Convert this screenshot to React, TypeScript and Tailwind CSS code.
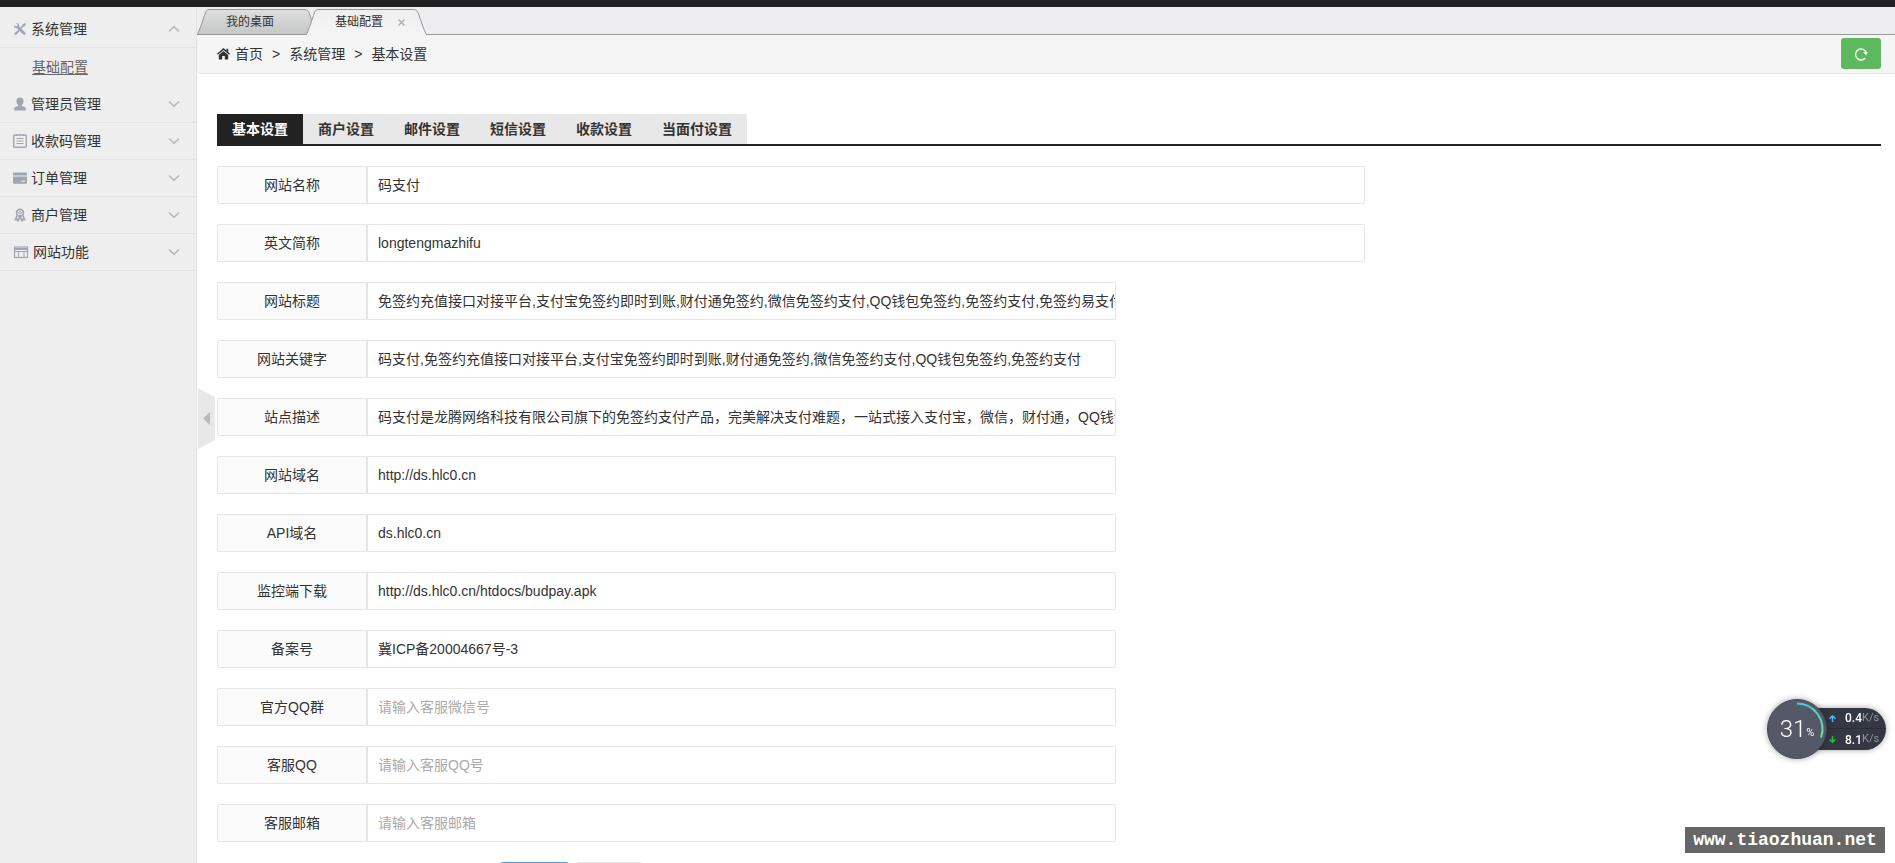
import type { ReactNode } from "react";

type MenuItem = {
  title: string;
  icon: ReactNode;
  open?: boolean;
  children?: string[];
};

type Field = {
  id: string;
  label: string;
  value?: string;
  placeholder?: string;
  wide?: boolean;
};

const menu: MenuItem[] = [
  {
    title: "系统管理",
    open: true,
    children: ["基础配置"],
    icon: (
      <svg viewBox="0 0 14 14" className="h-3.5 w-3.5 shrink-0" fill="currentColor">
        <path d="M1 3.200C.6 5 2 6.600 4 6.200L10.200 12.600C11.200 13.600 13.200 12.400 12.400 10.800L6.200 4.400C6.600 2.200 5 .6 3 1L4.600 2.800 4.300 4.100 2.900 4.500Z" />
        <path d="M13.200 2 12 .9 9.400 2.600 9.200 3.700 7.200 5.800 8.300 6.900 10.400 4.800 11.500 4.600Z" />
        <path d="M5.800 7.400 1.600 11.100C.6 12.200 2 13.800 3.200 12.800L7 8.700Z" />
      </svg>
    ),
  },
  {
    title: "管理员管理",
    icon: (
      <svg viewBox="0 0 14 14" className="h-3.5 w-3.5 shrink-0" fill="currentColor">
        <path d="M7 .5c2.200 0 3.600 1.500 3.600 3.500 0 1.700-.7 3-1.700 3.900v1.200c2.300.5 3.900 1.200 4 2.600.1 1-.3 1.500-1 1.700H2.100c-.7-.2-1.100-.7-1-1.700.1-1.400 1.700-2.100 4-2.600V7.900C4.100 7 3.400 5.700 3.400 4 3.400 2 4.800.5 7 .5Z" />
      </svg>
    ),
  },
  {
    title: "收款码管理",
    icon: (
      <svg viewBox="0 0 14 14" className="h-3.5 w-3.5 shrink-0" fill="none" stroke="currentColor">
        <rect x=".7" y="1" width="12.600" height="12.300" rx="1.200" strokeWidth="1.400" />
        <path d="M3.500 4.500h7M3.500 7h7M3.500 9.500h7" />
        <path d="M3.500 0v2M10.500 0v2" strokeWidth="1.200" />
      </svg>
    ),
  },
  {
    title: "订单管理",
    icon: (
      <svg viewBox="0 0 14 14" className="h-3.5 w-3.5 shrink-0" fill="currentColor">
        <path d="M1.200 1.500h11.600c.7 0 1.200.5 1.200 1.200V4.500H0V2.700C0 2 .5 1.500 1.200 1.500Z" />
        <path fillRule="evenodd" d="M0 5.500h14v6c0 .7-.5 1.200-1.200 1.200H1.200C.5 12.700 0 12.200 0 11.500Zm8.500 4v1.200h3.500V9.500Z" />
      </svg>
    ),
  },
  {
    title: "商户管理",
    icon: (
      <svg viewBox="0 0 14 14" className="h-3.5 w-3.5 shrink-0" fill="none" stroke="currentColor">
        <circle cx="7" cy="4.800" r="3.400" strokeWidth="1.700" />
        <circle cx="7" cy="4.800" r="1.200" />
        <path d="M4.200 7.500 2.400 11.500l1.700-.2.900 1.400L7 8.800l2 3.900.9-1.400 1.700.2L9.800 7.500" strokeWidth="1.600" />
      </svg>
    ),
  },
  {
    title: "网站功能",
    icon: (
      <svg viewBox="0 0 16 14" className="h-3.5 w-4 shrink-0" fill="none" stroke="currentColor">
        <rect x="1.500" y="2" width="13" height="10.500" strokeWidth="1.200" />
        <path d="M1.500 4h13" strokeWidth="2" />
        <path d="M1.500 6.500h13M5.500 6.500v6M11 6.500v6" />
      </svg>
    ),
  },
];

const settingTabs = ["基本设置", "商户设置", "邮件设置", "短信设置", "收款设置", "当面付设置"];

const fields: Field[] = [
  { id: "name", label: "网站名称", value: "码支付", wide: true },
  { id: "ename", label: "英文简称", value: "longtengmazhifu", wide: true },
  {
    id: "title",
    label: "网站标题",
    value:
      "免签约充值接口对接平台,支付宝免签约即时到账,财付通免签约,微信免签约支付,QQ钱包免签约,免签约支付,免签约易支付",
  },
  {
    id: "keywords",
    label: "网站关键字",
    value: "码支付,免签约充值接口对接平台,支付宝免签约即时到账,财付通免签约,微信免签约支付,QQ钱包免签约,免签约支付",
  },
  {
    id: "description",
    label: "站点描述",
    value:
      "码支付是龙腾网络科技有限公司旗下的免签约支付产品，完美解决支付难题，一站式接入支付宝，微信，财付通，QQ钱包",
  },
  { id: "domain", label: "网站域名", value: "http://ds.hlc0.cn" },
  { id: "api", label: "API域名", value: "ds.hlc0.cn" },
  { id: "download", label: "监控端下载", value: "http://ds.hlc0.cn/htdocs/budpay.apk" },
  { id: "icp", label: "备案号", value: "冀ICP备20004667号-3" },
  { id: "group", label: "官方QQ群", placeholder: "请输入客服微信号" },
  { id: "qq", label: "客服QQ", placeholder: "请输入客服QQ号" },
  { id: "email", label: "客服邮箱", placeholder: "请输入客服邮箱" },
];

function Sidebar() {
  return (
    <aside className="w-[197px] shrink-0 border-r border-[#e2e2e2] bg-[#eeeeee] pt-1">
      {menu.map((item) => (
        <div key={item.title}>
          <button
            type="button"
            className="flex h-[37px] w-full items-center gap-1 border-b border-[#e2e2e2] pr-4 pl-[13px] text-[#9fa6b2]"
          >
            {item.icon}
            <span className="text-[#333333]">{item.title}</span>
            <svg
              viewBox="0 0 12 8"
              className={`ml-auto h-2 w-3 text-[#b4b4b4] ${item.open ? "rotate-180" : ""}`}
              fill="none"
              stroke="currentColor"
              strokeWidth="1.400"
            >
              <path d="m1 1.500 5 4.700 5-4.700" />
            </svg>
          </button>
          {item.children?.map((child) => (
            <a key={child} href="#" className="flex h-[38px] items-center pl-8 text-[#666666] underline underline-offset-2">
              {child}
            </a>
          ))}
        </div>
      ))}
    </aside>
  );
}

function TabShape({ active = false }: { active?: boolean }) {
  return (
    <svg viewBox="0 0 121 26" className="absolute top-0 left-0 h-[26px] w-[121px]">
      <defs>
        <linearGradient id="idle-tab" x1="0" y1="0" x2="0" y2="1">
          <stop offset="0" stopColor="#dedfdf" />
          <stop offset="1" stopColor="#c4c5c5" />
        </linearGradient>
        <linearGradient id="active-tab" x1="0" y1="0" x2="0" y2="1">
          <stop offset="0" stopColor="#eeeeee" />
          <stop offset="1" stopColor="#f5f5f5" />
        </linearGradient>
      </defs>
      <path
        d="M0 26 C2 24 8 4 9 2.500 Q10 .5 12 .5 H108 Q110 .5 111.500 2.500 C113 5 118 23 121 26"
        fill={active ? "url(#active-tab)" : "url(#idle-tab)"}
        stroke="#979797"
      />
      {!active && <path d="M0 25.500H121" stroke="#979797" />}
    </svg>
  );
}

function WindowTabs() {
  return (
    <div className="flex h-7 items-end border-b border-[#999999] bg-[#eeeef0] text-xs">
      <button type="button" className="relative -mb-px h-[26px] w-[109px] pl-[29px] text-left">
        <TabShape />
        <span className="relative">我的桌面</span>
      </button>
      <div className="relative -mb-px flex h-[26px] w-[121px] items-center pl-[29px]">
        <TabShape active />
        <a href="#" className="relative">
          基础配置
        </a>
        <button type="button" aria-label="关闭" className="relative ml-[15px] text-[#a9adb3]">
          <svg viewBox="0 0 7 7" className="h-[7px] w-[7px]" fill="none" stroke="currentColor" strokeWidth="1.400">
            <path d="m.5.5 6 6m0-6-6 6" />
          </svg>
        </button>
      </div>
    </div>
  );
}

function Breadcrumb() {
  return (
    <nav className="flex h-[39px] items-center gap-[9px] rounded-bl border-b border-[#e5e5e5] bg-[#f5f5f5] pr-3.5 pb-px pl-5">
      <a href="#" className="flex items-center gap-[5px]">
        <svg viewBox="0 0 13 12" className="h-3 w-[13px]" fill="#333333">
          <path d="M6.500 0 9.500 2.600V.8h1.700v3.300L13 5.700l-.9 1L6.500 1.900.9 6.700 0 5.700Z" />
          <path d="m6.500 3 4.700 4v4.400H7.800V8H5.200v3.400H1.800V7Z" />
        </svg>
        首页
      </a>
      <span>&gt;</span>
      <a href="#">系统管理</a>
      <span>&gt;</span>
      <span>基本设置</span>
      <button
        type="button"
        aria-label="刷新"
        className="ml-auto flex h-[31px] w-10 items-center justify-center rounded-[3px] bg-[#5eb95e] text-white"
      >
        <svg viewBox="0 0 14 14" className="h-3.5 w-3.5" fill="none" stroke="currentColor" strokeWidth="1.300">
          <path d="M11.300 11A5.500 5.500 0 1 1 12.300 5.800" />
          <path d="M9.200 5.300H14L12 8.200Z" fill="currentColor" stroke="none" />
        </svg>
      </button>
    </nav>
  );
}

function FieldRow({ field }: { field: Field }) {
  return (
    <div className="flex h-[38px]">
      <label
        htmlFor={field.id}
        className="flex w-[150px] shrink-0 items-center justify-center rounded-l-xs border border-[#e6e6e6] bg-[#fbfbfb]"
      >
        {field.label}
      </label>
      <input
        id={field.id}
        type="text"
        defaultValue={field.value}
        placeholder={field.placeholder}
        className={`rounded-r-xs border border-[#e6e6e6] bg-white pl-2.5 outline-none placeholder:text-[#aaaaaa] ${
          field.wide ? "w-[60%]" : "w-[45%]"
        }`}
      />
    </div>
  );
}

function SpeedWidget() {
  return (
    <div className="fixed right-[9px] bottom-[104px] flex h-[60px] items-center font-['Roboto','Noto_Sans_CJK_SC',sans-serif]">
      <div className="relative z-10 flex h-[60px] w-[60px] items-center justify-center rounded-full border border-[#454955] bg-[#555967] text-white shadow-[0_0_6px_rgba(0,0,0,0.35)]">
        <span className="text-2xl font-light">31</span>
        <span className="mt-2 text-[11px]">%</span>
        <svg viewBox="0 0 60 60" className="absolute -top-px -left-px h-[60px] w-[60px]" fill="none">
          <defs>
            <linearGradient id="load" x1="0" y1="0" x2="0" y2="1">
              <stop offset="0" stopColor="#3fd3e0" />
              <stop offset="1" stopColor="#7be08a" />
            </linearGradient>
          </defs>
          <path d="M30 4.500A25.500 25.500 0 0 1 54 38.500" stroke="url(#load)" strokeWidth="2" />
        </svg>
      </div>
      <div className="-ml-7 flex h-[42px] w-[87px] flex-col rounded-r-full bg-[#343842] pl-[30px] text-xs text-white shadow-[0_0_6px_rgba(0,0,0,0.35)]">
        <div className="flex h-[21px] items-center border-b border-[#2a2d36]">
          <svg viewBox="0 0 7 7" className="mr-[9px] h-[7px] w-[7px] shrink-0" fill="none" stroke="#4db5f5" strokeWidth="1.500">
            <path d="M3.500 7V1M.5 3.800l3-3 3 3" />
          </svg>
          <span className="font-medium">0.4</span>
          <span className="text-[11px] text-[#9295a0]">K/s</span>
        </div>
        <div className="flex h-[21px] items-center">
          <svg viewBox="0 0 7 7" className="mr-[9px] h-[7px] w-[7px] shrink-0" fill="none" stroke="#33b83a" strokeWidth="1.500">
            <path d="M3.500 0v6M.5 3.200l3 3 3-3" />
          </svg>
          <span className="font-medium">8.1</span>
          <span className="text-[11px] text-[#9295a0]">K/s</span>
        </div>
      </div>
    </div>
  );
}

export default function App() {
  return (
    <div className="flex h-screen flex-col overflow-hidden bg-white font-['Liberation_Sans','Noto_Sans_CJK_SC',sans-serif] text-sm text-[#333333]">
      <header className="h-[7px] shrink-0 bg-[#222222]" />
      <div className="flex min-h-0 flex-1">
        <Sidebar />
        <main className="relative min-w-0 flex-1 overflow-hidden">
          <WindowTabs />
          <Breadcrumb />
          <button type="button" aria-label="收起菜单" className="absolute top-[381px] left-px">
            <svg viewBox="0 0 17 61" className="h-[61px] w-[17px]">
              <path d="M0 0 17 9V52L0 61Z" fill="#e8e8e8" />
              <path d="M12 24V37L5 30.500Z" fill="#b9b9b9" />
            </svg>
          </button>
          <form className="pt-10 pr-3.5 pl-5">
            <div className="flex border-b-2 border-[#222222]">
              <div className="flex bg-[#e8e8e8]">
                {settingTabs.map((tab, i) => (
                  <button
                    key={tab}
                    type="button"
                    className={`h-[30px] px-[15px] font-bold ${i === 0 ? "bg-[#222222] text-white" : ""}`}
                  >
                    {tab}
                  </button>
                ))}
              </div>
            </div>
            <div className="flex flex-col gap-5 pt-5">
              {fields.map((field) => (
                <FieldRow key={field.id} field={field} />
              ))}
              <div className="flex gap-[7px] pl-[283px]">
                <button type="submit" aria-label="保存" className="h-8 w-[69px] rounded-[3px] bg-[#5a98de]" />
                <button type="reset" aria-label="取消" className="h-8 w-[67px] rounded-[3px] bg-[#e6e6e6]" />
              </div>
            </div>
          </form>
        </main>
      </div>
      <SpeedWidget />
      <div className="fixed right-2.5 bottom-2.5 flex h-[26px] w-[200px] items-center justify-center bg-[#666666] font-['Liberation_Mono',monospace] text-lg font-bold text-white">
        www.tiaozhuan.net
      </div>
    </div>
  );
}
